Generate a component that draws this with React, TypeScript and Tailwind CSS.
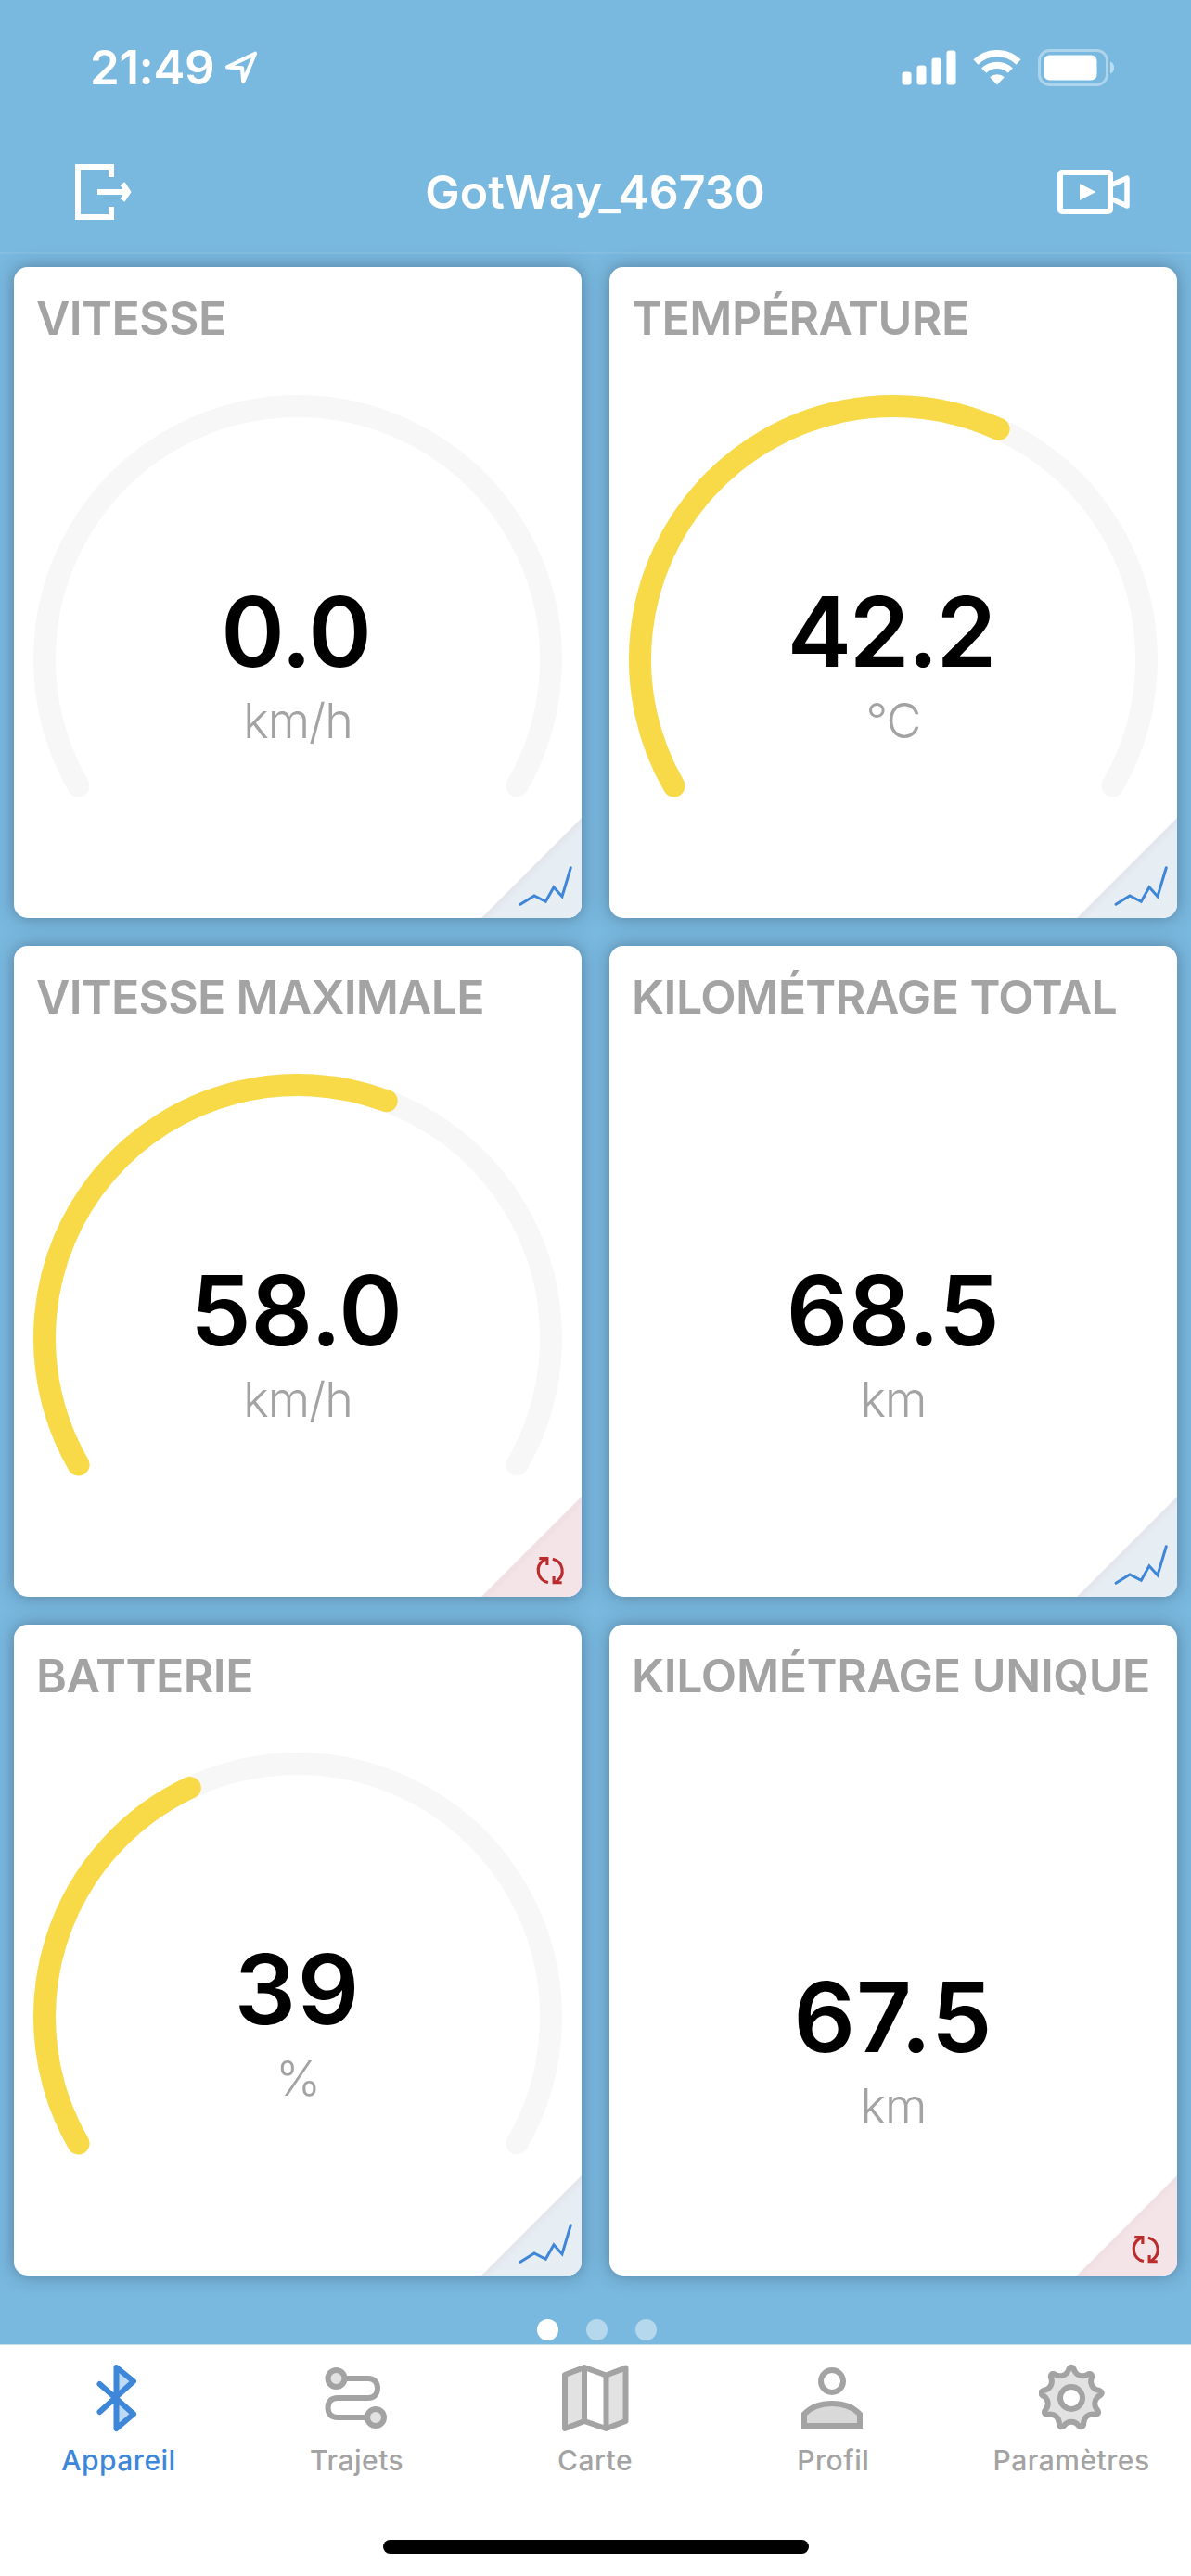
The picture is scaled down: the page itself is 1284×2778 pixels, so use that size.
import React from 'react';

type Metric = {
  title: string;
  titleClass: string;
  value: string;
  valueClass: string;
  unit: string;
  gauge?: number;
  action: 'chart' | 'reset';
};

const metrics: Metric[] = [
  { title: 'VITESSE', titleClass: 'tracking-[-0.6px]', value: '0.0', valueClass: 'mt-[261px] pr-[4px] tracking-[-1px]', unit: 'km/h', gauge: 0, action: 'chart' },
  { title: 'TEMPÉRATURE', titleClass: 'tracking-[-0.5px]', value: '42.2', valueClass: 'mt-[261px] pr-[5px] tracking-[-2.1px]', unit: '°C', gauge: 0.6025, action: 'chart' },
  { title: 'VITESSE MAXIMALE', titleClass: 'tracking-[-0.75px]', value: '58.0', valueClass: 'mt-[261px] pr-[3px] tracking-[0px]', unit: 'km/h', gauge: 0.5855, action: 'reset' },
  { title: 'KILOMÉTRAGE TOTAL', titleClass: 'tracking-[-0.55px]', value: '68.5', valueClass: 'mt-[261px] tracking-[0.5px]', unit: 'km', action: 'chart' },
  { title: 'BATTERIE', titleClass: 'tracking-[-0.5px]', value: '39', valueClass: 'mt-[261px] tracking-[2px]', unit: '%', gauge: 0.395, action: 'chart' },
  { title: 'KILOMÉTRAGE UNIQUE', titleClass: 'tracking-[-0.35px]', value: '67.5', valueClass: 'mt-[291px] tracking-[1px]', unit: 'km', action: 'reset' },
];

const GAUGE_RADIUS = 273;
const GAUGE_SWEEP = 240;

const gaugePoint = (fraction: number) => {
  const angle = ((fraction * GAUGE_SWEEP - 120) * Math.PI) / 180;
  return `${306 + GAUGE_RADIUS * Math.sin(angle)} ${423 - GAUGE_RADIUS * Math.cos(angle)}`;
};

const gaugePath = (fraction: number) => {
  const large = fraction * GAUGE_SWEEP > 180 ? 1 : 0;
  return `M${gaugePoint(0)} A${GAUGE_RADIUS} ${GAUGE_RADIUS} 0 ${large} 1 ${gaugePoint(fraction)}`;
};

const Gauge = ({ fraction }: { fraction: number }) => (
  <svg className="absolute inset-0" width="612" height="702" viewBox="0 0 612 702" fill="none" strokeWidth="24" strokeLinecap="round">
    <path d={gaugePath(1)} stroke="#f7f7f7" />
    {fraction > 0 && <path d={gaugePath(fraction)} stroke="#f8da49" />}
  </svg>
);

const ChartCorner = () => (
  <svg className="absolute right-0 bottom-0" width="108" height="108" viewBox="0 0 108 108" fill="none">
    <defs>
      <linearGradient id="chartFold" x1="54" y1="54" x2="60" y2="60" gradientUnits="userSpaceOnUse">
        <stop stopColor="#e2e5eb" />
        <stop offset="1" stopColor="#e6edf3" />
      </linearGradient>
    </defs>
    <path d="M0 108 L108 0 V108 Z" fill="url(#chartFold)" />
    <path d="M42 93.3 L57 84 L69.3 90.3 L78 74.7 L87 84.7 L96.3 53.7" stroke="#3f87d6" strokeWidth="3" strokeLinecap="round" />
  </svg>
);

const ResetCorner = () => (
  <svg className="absolute right-0 bottom-0" width="108" height="108" viewBox="0 0 108 108" fill="none">
    <defs>
      <linearGradient id="resetFold" x1="54" y1="54" x2="60" y2="60" gradientUnits="userSpaceOnUse">
        <stop stopColor="#efdfe2" />
        <stop offset="1" stopColor="#f4e4e8" />
      </linearGradient>
    </defs>
    <path d="M0 108 L108 0 V108 Z" fill="url(#resetFold)" />
    <g stroke="#bb2c2c" strokeWidth="3.1">
      <path d="M72 92.6 A13.3 13.3 0 0 1 67 68.6 L71 66.8" />
      <path d="M62.3 66.6 H70.9 V73.9" />
      <path d="M76.8 67.2 A13.3 13.3 0 0 1 81.6 91 L78 93" />
      <path d="M78.1 86 V92.8 H86.7" />
    </g>
  </svg>
);

const MetricCard = ({ metric }: { metric: Metric }) => (
  <section className="relative h-[702px] rounded-[15px] overflow-hidden bg-white pt-[30px]">
    {metric.gauge !== undefined && <Gauge fraction={metric.gauge} />}
    <h2 className={`relative pl-[24px] text-[50px] leading-[50px] font-semibold whitespace-nowrap text-[#a3a3a3] ${metric.titleClass}`}>
      {metric.title}
    </h2>
    <div className={`relative text-center text-[104px] leading-[104px] font-semibold text-black ${metric.valueClass}`}>
      {metric.value}
    </div>
    <div className="relative mt-[19px] text-center text-[52px] leading-[52px] font-light tracking-[-1px] text-[#a3a3a3]">
      {metric.unit}
    </div>
    {metric.action === 'chart' ? <ChartCorner /> : <ResetCorner />}
  </section>
);

const StatusBar = () => (
  <div className="flex h-[145px] items-center justify-between pl-[97px] pr-[81px]">
    <div className="flex items-center gap-[11px]">
      <span className="text-[51px] leading-none font-semibold tracking-[-0.4px]">21:49</span>
      <svg width="36" height="36" viewBox="0 0 36 36" fill="none" stroke="white" strokeWidth="4.2" strokeLinejoin="round">
        <path d="M3 17.3 L33 2.8 L20.3 33 L19 18.4 Z" />
      </svg>
    </div>
    <div className="flex items-center">
      <svg width="59" height="38" viewBox="0 0 59 38" fill="white">
        <rect x="0.5" y="23.5" width="10" height="14" rx="3" />
        <rect x="16.5" y="16.5" width="10" height="21" rx="3" />
        <rect x="32.5" y="8.5" width="10" height="29" rx="3" />
        <rect x="48.5" y="0.5" width="10" height="37" rx="3" />
      </svg>
      <svg className="ml-[18px]" width="52" height="38" viewBox="0 0 52 38" fill="none" stroke="white">
        <path d="M3 13 A33 33 0 0 1 49 13" strokeWidth="7.4" />
        <path d="M11.7 22.2 A20.5 20.5 0 0 1 40.3 22.2" strokeWidth="7.4" />
        <path d="M26 37.5 L18.2 29.2 A11.5 11.5 0 0 1 33.8 29.2 Z" fill="white" stroke="none" />
      </svg>
      <svg className="ml-[18px]" width="84" height="40" viewBox="0 0 84 40" fill="none">
        <rect x="1.5" y="1.5" width="73" height="37" rx="11" stroke="white" strokeOpacity="0.4" strokeWidth="3" />
        <rect x="6.5" y="6.5" width="57" height="27" rx="6" fill="white" />
        <path d="M78 13.5 C83.5 15.5 83.5 24.5 78 26.5 Z" fill="white" fillOpacity="0.5" />
      </svg>
    </div>
  </div>
);

const NavBar = () => (
  <div className="flex h-[129px] items-center justify-between border-b-2 border-[#84bee1] pb-[3px] pl-[81px] pr-[64px]">
    <svg width="62" height="62" viewBox="0 0 62 62" fill="none" stroke="white" strokeWidth="6">
      <path d="M39 15 V4 H3 V58 H39 V47" />
      <path d="M24 31 H57" />
      <path d="M51 22 L57 31 L51 40" />
    </svg>
    <h1 className="text-[50px] leading-none font-semibold tracking-[0.1px]">GotWay_46730</h1>
    <svg width="80" height="50" viewBox="0 0 80 50" fill="none" stroke="white" strokeWidth="6" strokeLinejoin="round">
      <rect x="3" y="4" width="54" height="42" rx="2" />
      <path d="M57 18 L75 10 V40 L57 32" strokeWidth="5.5" />
      <path d="M24 16 L41.5 25 L24 34 Z" fill="white" stroke="none" />
    </svg>
  </div>
);

const BluetoothIcon = () => (
  <svg width="72" height="76" viewBox="0 0 72 76" fill="none" stroke="#3d86d8" strokeWidth="6" strokeLinecap="round" strokeLinejoin="round">
    <path d="M33.5 5 L52.5 20 L33.5 37 Z M33.5 39 L52.5 55.3 L33.5 71 Z" fill="#bcd9f5" stroke="none" />
    <path d="M15.5 23 L52 55.3 L33.5 71 V5 L52 20 L15.5 53" />
  </svg>
);

const RouteIcon = () => (
  <svg width="72" height="76" viewBox="0 0 72 76" fill="none" stroke="#a3a3a3" strokeWidth="6">
    <path d="M24 17 H48 C54 17 58 21 58 27.5 C58 34 54 38 48 38 H15 C8 38 4.5 42 4.5 48.5 C4.5 55 8 59 15 59 H44" />
    <circle cx="13.5" cy="17" r="9" fill="#e2e2e2" />
    <circle cx="56" cy="59" r="9" fill="#e2e2e2" />
  </svg>
);

const MapIcon = () => (
  <svg width="72" height="76" viewBox="0 0 72 76" fill="none" stroke="#a3a3a3" strokeWidth="6" strokeLinejoin="round">
    <path d="M3 13 L24 5 V63 L3 71 Z M47.5 13.5 L68.5 5.5 V63 L47.5 71 Z" fill="#e2e2e2" stroke="none" />
    <path d="M3 13 L24 5 L47.5 13.5 L68.5 5.5 V63 L47.5 71 L24 63 L3 71 Z" />
    <path d="M24 5 V63 M47.5 13.5 V71" />
  </svg>
);

const ProfileIcon = () => (
  <svg width="72" height="76" viewBox="0 0 72 76" fill="none" stroke="#a3a3a3" strokeWidth="6">
    <circle cx="34" cy="20" r="12" />
    <path d="M4 68 V55.5 C11 48 21 44 34 44 C47 44 57 48 64 55.5 V68 Z" fill="#d9d9d9" />
  </svg>
);

// nine rounded teeth around the hub
const gearPath = () => {
  const at = (deg: number, r: number) => {
    const a = (deg * Math.PI) / 180;
    return `${(35 + r * Math.sin(a)).toFixed(2)} ${(38 - r * Math.cos(a)).toFixed(2)}`;
  };
  let d = `M${at(-4.5, 31.6)}`;
  for (let i = 0; i < 9; i++) {
    const t = i * 40;
    d += ` Q${at(t, 35)} ${at(t + 4.5, 31.6)} C${at(t + 11, 24.6)} ${at(t + 29, 24.6)} ${at(t + 35.5, 31.6)}`;
  }
  return `${d} Z`;
};

const SettingsIcon = () => (
  <svg width="72" height="76" viewBox="0 0 72 76" fill="none" stroke="#a3a3a3" strokeWidth="6" strokeLinejoin="round">
    <path d={gearPath()} fill="#e2e2e2" />
    <circle cx="35" cy="38" r="12" fill="white" />
  </svg>
);

const tabs = [
  { label: 'Appareil', icon: <BluetoothIcon />, color: 'text-[#3d86d8]' },
  { label: 'Trajets', icon: <RouteIcon />, color: 'text-[#a3a3a3]' },
  { label: 'Carte', icon: <MapIcon />, color: 'text-[#a3a3a3]' },
  { label: 'Profil', icon: <ProfileIcon />, color: 'text-[#a3a3a3]' },
  { label: 'Paramètres', icon: <SettingsIcon />, color: 'text-[#a3a3a3]' },
];

const TabBar = () => (
  <nav className="flex h-[250px] flex-col items-center justify-between border-t border-[#c9dcea] bg-white pt-[19px] pb-[24px]">
    <div className="grid w-full grid-cols-5">
      {tabs.map((tab) => (
        <div key={tab.label} className={`flex flex-col items-center ${tab.color}`}>
          {tab.icon}
          <span className="mt-[14px] pr-[1px] text-[30px] leading-[30px] font-medium tracking-[0.5px]">{tab.label}</span>
        </div>
      ))}
    </div>
    <div className="h-[15px] w-[459px] rounded-full bg-black" />
  </nav>
);

const App = () => {
  return (
    <div className="flex h-[2778px] w-[1284px] flex-col overflow-hidden bg-[#79b8df] font-['Inter',sans-serif] text-white">
      <StatusBar />
      <NavBar />
      <main className="flex flex-1 flex-col items-center px-[15px] pt-[14px]">
        <div className="grid w-full grid-cols-2 gap-[30px]">
          {metrics.map((metric) => (
            <div key={metric.title} className="rounded-[15px] shadow-[0_0_18px_rgba(50,70,90,0.5)]">
              <MetricCard metric={metric} />
            </div>
          ))}
        </div>
        <div className="mt-[47px] flex gap-[30px] pl-[2px]">
          <span className="size-[23px] rounded-full bg-white" />
          <span className="size-[23px] rounded-full bg-white/45" />
          <span className="size-[23px] rounded-full bg-white/45" />
        </div>
      </main>
      <TabBar />
    </div>
  );
};

export default App;
